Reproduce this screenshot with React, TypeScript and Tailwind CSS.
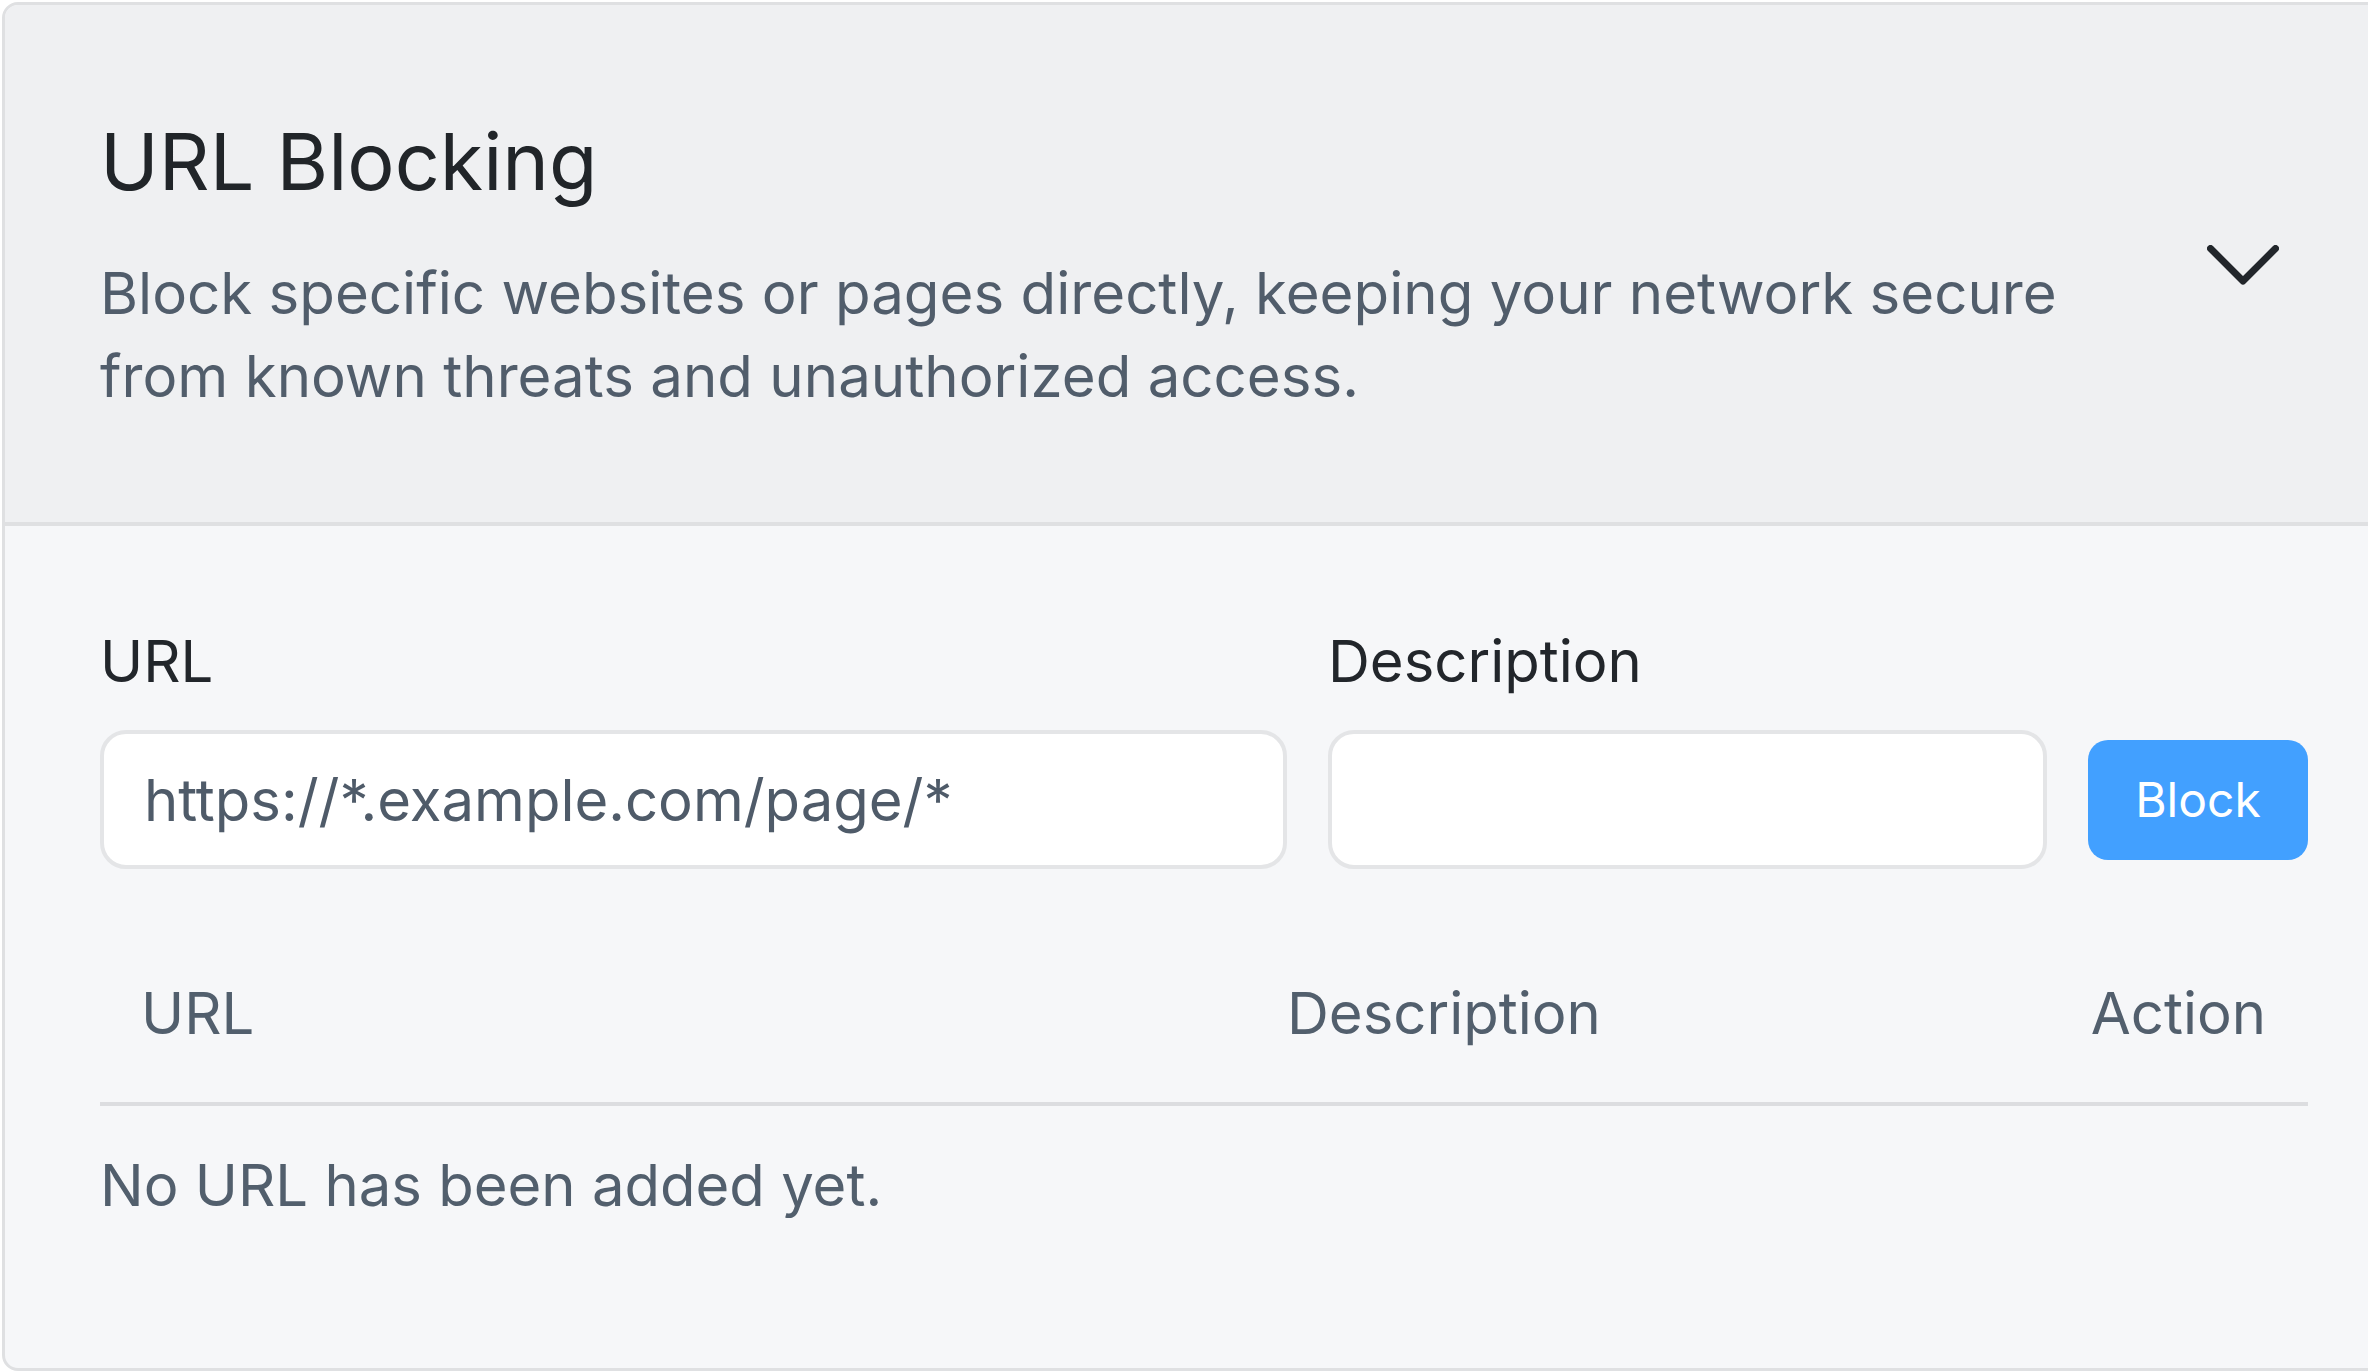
import { useState } from 'react'

function Chevron() {
  return (
    <svg width="72" height="40" viewBox="0 0 72 40" fill="none" className="shrink-0">
      <polyline
        points="3.5,3.5 36,36 68.5,3.5"
        stroke="#22262b"
        strokeWidth="7"
        strokeLinecap="round"
        strokeLinejoin="round"
      />
    </svg>
  )
}

export default function App() {
  const [url, setUrl] = useState('https://*.example.com/page/*')
  const [desc, setDesc] = useState('')

  return (
    <div className="h-screen w-screen overflow-hidden bg-white font-['Inter',sans-serif]">
      <div className="m-[2px] h-[1369px] w-[2410px] overflow-hidden rounded-[16px] border-[3px] border-[#dfe0e2] bg-[#f6f7f9]">
        {/* Header */}
        <div className="flex items-center border-b-[4px] border-[#dfe0e2] bg-[#eff0f2] pb-[104px] pl-[95px] pr-[130px] pt-[106px]">
          <div className="w-[2063px]">
            <h2 className="text-[79px] leading-[101px] font-normal text-[#212529]">URL Blocking</h2>
            <p className="mt-[40px] text-[58.2px] leading-[83px] text-[#515d6b]">
              Block specific websites or pages directly, keeping your network secure from known threats and
              unauthorized access.
            </p>
          </div>
          <div className="ml-[48px]">
            <Chevron />
          </div>
        </div>

        {/* Body */}
        <div className="w-[2208px] pl-[95px] pt-[90px] box-content">
          <div className="grid grid-cols-[1187px_719px_220px] items-center gap-x-[41px]">
            <label className="text-[58px] leading-[90px] text-[#22262b]">URL</label>
            <label className="text-[58px] leading-[90px] text-[#22262b]">Description</label>
            <div />
            <input
              value={url}
              onChange={(e) => setUrl(e.target.value)}
              className="mt-[24px] h-[139px] w-full rounded-[26px] border-[4px] border-[#e4e5e7] bg-white pl-[40px] text-[58px] text-[#4f5b69] outline-none"
            />
            <input
              value={desc}
              onChange={(e) => setDesc(e.target.value)}
              className="mt-[24px] h-[139px] w-full rounded-[26px] border-[4px] border-[#e4e5e7] bg-white pl-[40px] text-[58px] text-[#4f5b69] outline-none"
            />
            <button className="mt-[24px] h-[120px] w-[220px] rounded-[20px] bg-[#42a0ff] text-[48px] text-white">
              Block
            </button>
          </div>

          {/* Table */}
          <div className="mt-[55px]">
            <div className="grid grid-cols-[1142px_1fr_auto] border-b-[4px] border-[#dcdde0] py-[44px] text-[58px] leading-[90px] text-[#525f6d]">
              <div className="px-[41px]">URL</div>
              <div className="px-[45px]">Description</div>
              <div className="px-[42px]">Action</div>
            </div>
            <div className="pt-[34px] text-[58px] leading-[90px] text-[#525f6d]">No URL has been added yet.</div>
          </div>
        </div>
      </div>
    </div>
  )
}
